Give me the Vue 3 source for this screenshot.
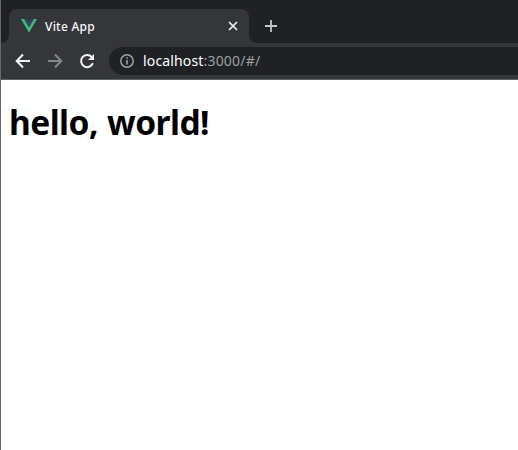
<script setup>
const tabTitle = 'Vite App'
const host = 'localhost'
const path = ':3000/#/'
</script>

<template>
  <div class="window">
    <header class="strip">
      <div class="tab">
        <svg class="logo" width="16" height="14" viewBox="0 0 16 14">
          <path d="M0 0H3.2L8 8.3 12.8 0H16L8 13.8Z" fill="#41b883" />
          <path d="M3.2 0H6.2L8 3.1 9.8 0H12.8L8 8.3Z" fill="#35495e" />
        </svg>
        <span class="title">{{ tabTitle }}</span>
        <svg class="close" width="10" height="10" viewBox="0 0 10 10">
          <path d="M1 1L9 9M9 1L1 9" stroke="#f1f3f4" stroke-width="1.7" />
        </svg>
      </div>
      <svg class="plus" width="12" height="12" viewBox="0 0 12 12">
        <path d="M6 0V12M0 6H12" stroke="#c4c6c8" stroke-width="1.8" />
      </svg>
    </header>
    <nav class="toolbar">
      <svg class="nav" width="16" height="16" viewBox="0 0 16 16" stroke="#f1f3f4">
        <path d="M15 8H2.2M8 1.5L1.7 8 8 14.5" />
      </svg>
      <svg class="nav" width="16" height="16" viewBox="0 0 16 16" stroke="#85878a">
        <path d="M1 8H13.8M8 1.5L14.3 8 8 14.5" />
      </svg>
      <svg class="nav" width="16" height="16" viewBox="0 0 16 16" stroke="#f1f3f4">
        <path d="M13.9 10.2A6.1 6.1 0 1 1 12.7 3.9" />
        <path d="M15 1V7H9Z" fill="#f1f3f4" stroke="none" />
      </svg>
      <div class="address">
        <svg width="14" height="14" viewBox="0 0 14 14">
          <circle cx="7" cy="7" r="6.2" fill="none" stroke="#9aa0a6" stroke-width="1.5" />
          <path d="M7 3.2V4.8M7 6V10.6" stroke="#9aa0a6" stroke-width="1.6" />
        </svg>
        <span class="url">{{ host }}<span class="path">{{ path }}</span></span>
      </div>
    </nav>
    <main class="page">
      <h1>hello, world!</h1>
    </main>
  </div>
</template>

<style>
body {
  margin: 0;
  overflow: hidden;
}
</style>

<style scoped>
.window {
  box-sizing: border-box;
  width: 518px;
  height: 450px;
  display: flex;
  flex-direction: column;
  border-left: 1px solid #69696b;
  background: #fff;
  font-family: "Noto Sans", "Open Sans", sans-serif;
}
.strip {
  box-sizing: border-box;
  height: 43px;
  flex: none;
  display: flex;
  padding: 9px 0 0 8px;
  background: #202124;
}
.tab {
  position: relative;
  box-sizing: border-box;
  width: 240px;
  height: 34px;
  display: flex;
  align-items: center;
  padding: 0 11px 0 12px;
  border-radius: 8px 8px 0 0;
  background: #35363a;
}
.tab::before,
.tab::after {
  content: "";
  position: absolute;
  bottom: 0;
  width: 8px;
  height: 8px;
}
.tab::before {
  right: 100%;
  background: radial-gradient(circle at 0 0, #202124 7.5px, #35363a 8.5px);
}
.tab::after {
  left: 100%;
  background: radial-gradient(circle at 100% 0, #202124 7.5px, #35363a 8.5px);
}
.title {
  margin: 2px 0 0 8px;
  color: #f8f9fa;
  font-size: 12px;
  font-weight: 500;
  line-height: 16px;
  letter-spacing: 0.25px;
}
.close {
  margin-left: auto;
}
.plus {
  margin: 11px 0 0 16px;
}
.toolbar {
  box-sizing: border-box;
  height: 37px;
  flex: none;
  display: flex;
  align-items: center;
  gap: 16px;
  padding-left: 14px;
  border-bottom: 1px solid #606164;
  background: #35363a;
}
.nav {
  fill: none;
  stroke-width: 2;
}
.address {
  box-sizing: border-box;
  height: 28px;
  flex: 1;
  display: flex;
  align-items: center;
  gap: 9px;
  margin-left: -2px;
  padding-left: 11px;
  border-radius: 14px 0 0 14px;
  background: #202124;
}
.url {
  color: #fff;
  font-size: 14px;
  line-height: 20px;
  letter-spacing: 0.15px;
}
.path {
  color: #9aa0a6;
  letter-spacing: 0.2px;
}
.page {
  padding: 21px 8px;
}
h1 {
  margin: 0;
  color: #000;
  font-size: 33.5px;
  font-weight: 700;
  line-height: 43px;
  letter-spacing: -0.55px;
  word-spacing: 1px;
  white-space: nowrap;
}
</style>
